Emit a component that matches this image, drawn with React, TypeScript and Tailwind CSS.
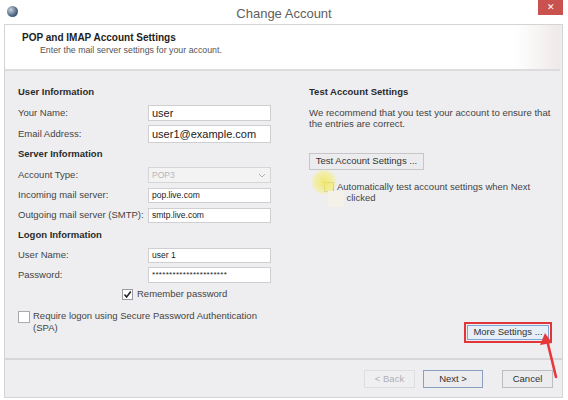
import React from "react";

function Field({ label, h = "h-[20px]", children }: { label: string; h?: string; children: React.ReactNode }) {
  return (
    <div className={`flex items-center ${h}`}>
      <span className="w-[130px] text-[9.5px] text-[#444]">{label}</span>
      {children}
    </div>
  );
}

function TextBox({ value, h = "h-[15px]", size = "text-[8.5px]" }: { value: string; h?: string; size?: string }) {
  return (
    <div className={`w-[123px] ${h} bg-white border border-[#cfcfd2] flex items-center px-[3px] ${size} text-[#222]`}>
      {value}
    </div>
  );
}

function Section({ title, h = "h-[20px]" }: { title: string; h?: string }) {
  return <div className={`${h} flex items-center text-[9.5px] font-bold text-[#2a2a2a]`}>{title}</div>;
}

function Button({ label, className = "" }: { label: string; className?: string }) {
  return (
    <div className={`h-[18px] flex items-center justify-center border text-[9.5px] ${className}`}>{label}</div>
  );
}

export default function App() {
  return (
    <div className="w-[568px] h-[400px] bg-white overflow-hidden relative font-['Liberation_Sans',Arial,sans-serif] text-[#333]">
      {/* Title bar */}
      <div className="h-[24px] grid grid-cols-[1fr_auto_1fr] items-start">
        <div className="pl-[7px] pt-[6px]">
          <div className="w-[11px] h-[11px] rounded-full bg-[radial-gradient(circle_at_35%_35%,#c9d3de,#4a6582_60%,#2b3f55)]" />
        </div>
        <div className="pt-[4px] text-[13px] text-[#606060]">Change Account</div>
        <div className="flex justify-end pr-[5px]">
          <div className="w-[25px] h-[15px] bg-[#c9514e] flex items-center justify-center text-white text-[9px] leading-none">
            ✕
          </div>
        </div>
      </div>

      {/* Window frame */}
      <div className="ml-[4px] w-[559px] h-[374px] border border-[#d4d4d7] bg-[#eeeef0] flex flex-col">
        {/* Header */}
        <div className="h-[46px] mr-[2px] bg-white border-b-2 border-[#dcdcdf] flex">
          <div className="flex-1 pl-[17px] pt-[7px]">
            <div className="text-[10px] leading-[12px] font-bold text-[#1e1e1e]">POP and IMAP Account Settings</div>
            <div className="pl-[18px] pt-[1px] text-[8.8px] leading-[11px] text-[#555]">
              Enter the mail server settings for your account.
            </div>
          </div>
          <div className="w-[46px] bg-[linear-gradient(90deg,#ffffff,#efe9e9)]" />
        </div>

        {/* Body */}
        <div className="flex-1 flex pt-[11px] relative">
          {/* Left column */}
          <div className="pl-[13px] w-[300px] flex flex-col">
            <Section title="User Information" />
            <Field label="Your Name:" h="h-[22px]">
              <TextBox value="user" h="h-[16px]" size="text-[11px]" />
            </Field>
            <Field label="Email Address:" h="h-[20px]">
              <TextBox value="user1@example.com" h="h-[18px]" size="text-[11px]" />
            </Field>
            <Section title="Server Information" h="h-[21px]" />
            <Field label="Account Type:">
              <div className="w-[123px] h-[16px] bg-[#f3f3f4] border border-[#d6d6d9] flex items-center justify-between px-[3px] text-[8.5px] text-[#b5b5b8]">
                <span>POP3</span>
                <svg width="8" height="5" viewBox="0 0 8 5" className="mr-[1px]">
                  <path d="M1 1 L4 4 L7 1" fill="none" stroke="#b0b0b4" strokeWidth="1" />
                </svg>
              </div>
            </Field>
            <Field label="Incoming mail server:">
              <TextBox value="pop.live.com" />
            </Field>
            <Field label="Outgoing mail server (SMTP):">
              <TextBox value="smtp.live.com" />
            </Field>
            <Section title="Logon Information" />
            <Field label="User Name:">
              <TextBox value="user 1" />
            </Field>
            <Field label="Password:" h="h-[20px]">
              <TextBox value="**********************" h="h-[16px]" size="text-[8px] tracking-[0.3px]" />
            </Field>
            <div className="h-[19px] flex items-center pl-[104px] gap-[4px]">
              <div className="w-[11px] h-[11px] bg-white border border-[#9a9a9e] flex items-center justify-center">
                <svg width="9" height="9" viewBox="0 0 9 9">
                  <path d="M1.5 4.5 L3.6 7 L7.8 1.5" fill="none" stroke="#222" strokeWidth="1.6" />
                </svg>
              </div>
              <span className="text-[9.5px] text-[#444]">Remember password</span>
            </div>
            <div className="mt-[6px] flex items-start gap-[3px]">
              <div className="mt-[1px] w-[12px] h-[12px] bg-white border border-[#a9a9ad] shrink-0" />
              <span className="text-[9.5px] leading-[12px] text-[#444]">
                Require logon using Secure Password Authentication
                <br />
                (SPA)
              </span>
            </div>
          </div>

          {/* Right column */}
          <div className="pl-[4px] flex-1 flex flex-col">
            <Section title="Test Account Settings" />
            <div className="pt-[5px] text-[9.6px] leading-[11px] text-[#444]">
              We recommend that you test your account to ensure that
              <br />
              the entries are correct.
            </div>
            <div className="mt-[24px] w-[115px] h-[17px] bg-[#ececee] border border-[#c6c6c9] flex items-center justify-center text-[9.5px] text-[#333]">
              Test Account Settings ...
            </div>
            <div className="mt-[11px] pl-[15px] flex items-start gap-[3px] relative">
              <div className="mt-[1px] w-[10px] h-[10px] border border-[#b8b8a0] bg-[#f0ecb0] shrink-0" />
              <span className="text-[9.5px] leading-[11px] text-[#444]">
                Automatically test account settings when Next
                <br />
                is clicked
              </span>
              {/* cursor highlight */}
              <div className="absolute left-[2px] top-[-12px] w-[26px] h-[26px] rounded-full bg-[radial-gradient(circle,rgba(240,232,90,0.85)_0%,rgba(244,238,140,0.6)_55%,rgba(244,238,140,0)_72%)]" />
              <div className="absolute left-[19px] top-[10px] w-[16px] h-[16px] bg-[#f4f2e8]" />
            </div>
          </div>

          {/* More settings */}
          <div className="absolute left-[459px] top-[251px] border-2 border-[#e0363a] p-px">
            <div className="w-[82px] h-[15px] bg-[#e6eef8] border border-[#7ea6d6] flex items-center justify-center text-[9.5px] text-[#333]">
              More Settings ...
            </div>
          </div>
        </div>

        {/* Footer */}
        <div className="h-[39px] border-t-2 border-[#d6d6d9] flex items-start justify-end gap-[8px] pr-[9px] pt-[10px]">
          <Button label="< Back" className="w-[51px] bg-[#efeff1] border-[#dedee0] text-[#b0b0b3]" />
          <Button label="Next >" className="w-[60px] bg-[#ececee] border-[#8a9fc0] text-[#333] mr-[11px]" />
          <Button label="Cancel" className="w-[51px] bg-[#ececee] border-[#bdbdc0] text-[#333]" />
        </div>
      </div>

      {/* Red arrow */}
      <svg className="absolute left-[535px] top-[330px]" width="30" height="50" viewBox="0 0 30 50">
        <path d="M21 47 L12 10" stroke="#e5393c" strokeWidth="2.6" strokeLinecap="round" />
        <path d="M10 3 L5 15 L17 13 Z" fill="#e5393c" />
      </svg>
    </div>
  );
}
